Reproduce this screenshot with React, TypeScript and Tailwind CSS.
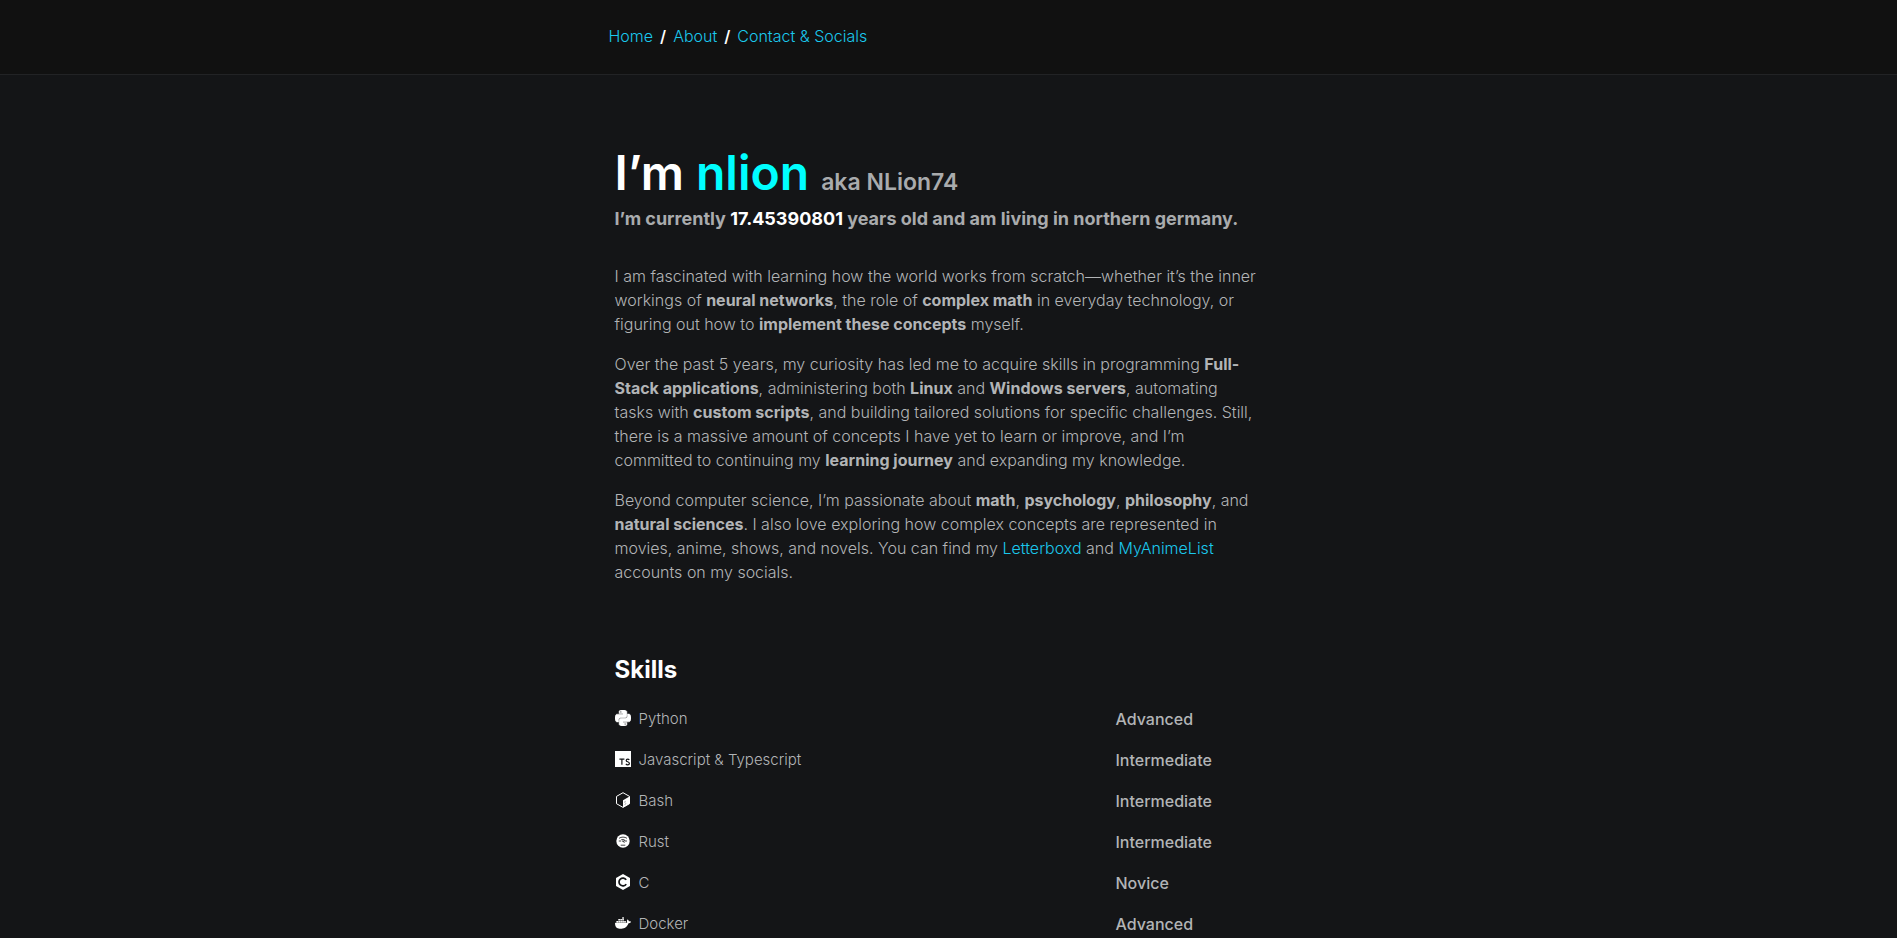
import React from 'react';
import { SiDocker, SiPython } from 'react-icons/si';

const link = 'text-[#1ac8ed] hover:underline';

const TypescriptIcon = () => (
    <svg viewBox="0 0 16 16" className="size-4" aria-hidden="true">
        <path fill="#fff" d="M0 0h16v16H0z" />
        <path
            d="M4.4 8.2h5M6.9 8.2v5.6M14.3 8.9c-.4-.5-.9-.7-1.6-.7-.9 0-1.5.5-1.5 1.2 0 1.8 3.2 1 3.2 3 0 .8-.7 1.4-1.7 1.4-.8 0-1.4-.3-1.8-.9"
            fill="none"
            stroke="#141517"
            strokeWidth="1.2"
        />
    </svg>
);

const BashIcon = () => (
    <svg viewBox="0 0 16 16" className="size-4" aria-hidden="true">
        <path d="M8 .7l6.5 3.7v7.3L8 15.400l-6.5-3.700V4.400z" fill="none" stroke="#fff" strokeWidth="1" />
        <path d="M8 8.200l6.5-3.700v7.200L8 15.400z" fill="#fff" />
        <path d="M10.700 9.300c-.7-.1-1.200.3-1.200.8 0 .9 1.300.6 1.300 1.500 0 .6-.6 1-1.200.9" fill="none" stroke="#77797b" strokeWidth="0.6" />
    </svg>
);

const RustIcon = () => (
    <svg viewBox="0 0 16 16" className="size-4" aria-hidden="true">
        <circle cx="8" cy="8" r="6.7" fill="#fff" />
        <path
            d="M4 5.300c2.400-1.600 5.600-1.600 8 0M3.800 8h2.400M9.600 8H12M6.300 6.600h2.600c1 0 1 1.500 0 1.500H7M8.200 8.200l1.200 1.600M5.700 12.200h4.600"
            fill="none"
            stroke="#141517"
            strokeWidth="0.8"
        />
    </svg>
);

const CIcon = () => (
    <svg viewBox="0 0 16 16" className="size-4" aria-hidden="true">
        <path d="M8 0l7 4v8l-7 4-7-4V4z" fill="#fff" />
        <path d="M11.200 5.900a3.900 3.900 0 1 0 0 4.200" fill="none" stroke="#141517" strokeWidth="1.7" />
    </svg>
);

const skills = [
    { name: 'Python', level: 'Advanced', icon: <SiPython className="size-4 stroke-white stroke-[0.8]" /> },
    { name: 'Javascript & Typescript', level: 'Intermediate', icon: <TypescriptIcon /> },
    { name: 'Bash', level: 'Intermediate', icon: <BashIcon /> },
    { name: 'Rust', level: 'Intermediate', icon: <RustIcon /> },
    { name: 'C', level: 'Novice', icon: <CIcon /> },
    { name: 'Docker', level: 'Advanced', icon: <SiDocker className="size-4" /> }
];

// line break that only applies on wide screens
const Br = () => <br className="max-md:hidden" />;

const Header: React.FC = () => (
    <header className="border-b border-[#222325] bg-[#111111]">
        <nav className="mx-auto flex max-w-[680px] gap-[7px] pt-6 pb-[26px] leading-6">
            <a href="#home" className={link}>Home</a>
            <span className="font-semibold text-white">/</span>
            <a href="#about" className={link}>About</a>
            <span className="font-semibold text-white">/</span>
            <a href="#contact" className={link}>Contact &amp; Socials</a>
        </nav>
    </header>
);

const App: React.FC = () => {
    return (
        <div className="h-screen overflow-y-auto bg-[#141517] font-[Inter,sans-serif] text-base font-light text-[#b2b4b6]">
            <Header />
            <main className="mx-auto max-w-[680px] px-1.5 pt-[72px]">
                <h1 className="text-5xl leading-[52px] font-semibold text-white">
                    I’m <span className="text-[#00ffff]">nlion</span>{' '}
                    <span className="text-[23px] leading-8 text-[#a9abad]">aka NLion74</span>
                </h1>
                <h2 className="mt-1.5 text-lg leading-7 font-bold text-[#a9abad]">
                    I’m currently <span className="text-white">17.45390801</span> years old and am living in northern germany.
                </h2>
                <div className="mt-[31px] space-y-4 leading-6">
                    <p>
                        I am fascinated with learning how the world works from scratch—whether it’s the inner <Br />
                        workings of <b className="font-bold">neural networks</b>, the role of{' '}
                        <b className="font-bold">complex math</b> in everyday technology, or <Br />
                        figuring out how to <b className="font-bold">implement these concepts</b> myself.
                    </p>
                    <p>
                        Over the past 5 years, my curiosity has led me to acquire skills in programming{' '}
                        <b className="font-bold">Full-<Br />Stack applications</b>, administering both{' '}
                        <b className="font-bold">Linux</b> and <b className="font-bold">Windows servers</b>, automating <Br />
                        tasks with <b className="font-bold">custom scripts</b>, and building tailored solutions for
                        specific challenges. Still, <Br />
                        there is a massive amount of concepts I have yet to learn or improve, and I’m <Br />
                        committed to continuing my <b className="font-bold">learning journey</b> and expanding my knowledge.
                    </p>
                    <p>
                        Beyond computer science, I’m passionate about <b className="font-bold">math</b>,{' '}
                        <b className="font-bold">psychology</b>, <b className="font-bold">philosophy</b>, and <Br />
                        <b className="font-bold">natural sciences</b>. I also love exploring how complex concepts are
                        represented in <Br />
                        movies, anime, shows, and novels. You can find my{' '}
                        <a href="#letterboxd" className={link}>Letterboxd</a> and{' '}
                        <a href="#myanimelist" className={link}>MyAnimeList</a> <Br />
                        accounts on my socials.
                    </p>
                </div>
                <h2 className="mt-[70px] text-2xl leading-8 font-bold text-white">Skills</h2>
                <table className="mt-3 w-full table-fixed text-left">
                    <tbody>
                        {skills.map((s) => (
                            <tr key={s.name} className="h-[41px]">
                                <th className="w-3/4 pt-0.5 text-[15px] font-light">
                                    <span className="flex items-center gap-2">
                                        <span className="pb-1 text-white">{s.icon}</span>
                                        {s.name}
                                    </span>
                                </th>
                                <td className="font-medium">{s.level}</td>
                            </tr>
                        ))}
                    </tbody>
                </table>
            </main>
        </div>
    );
};

export default App;
